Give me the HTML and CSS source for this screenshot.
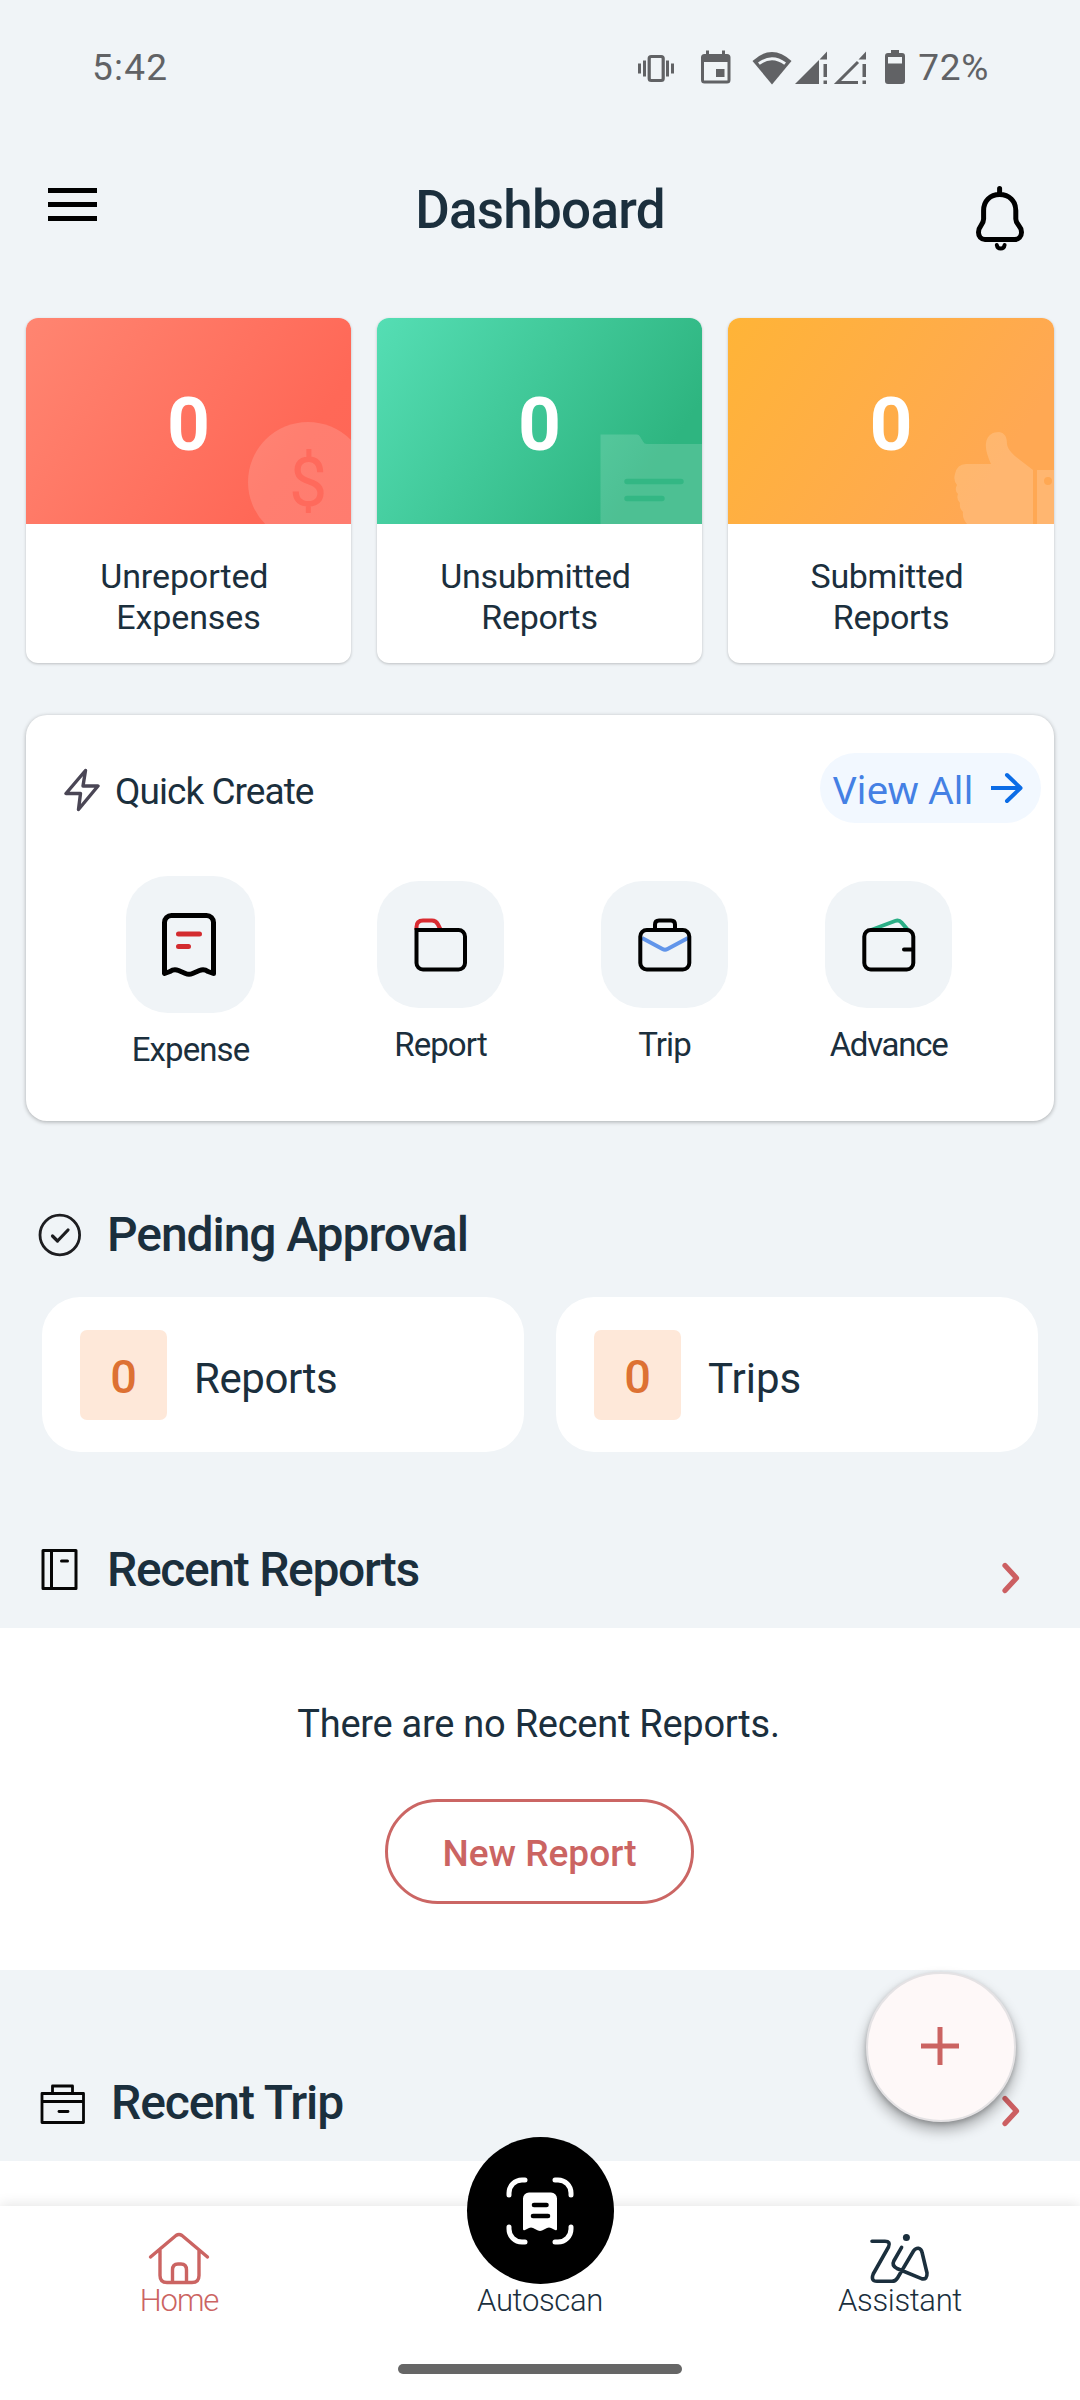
FILE: index.html
```html
<!DOCTYPE html>
<html lang="en">
<head>
<meta charset="utf-8">
<title>Dashboard</title>
<link rel="stylesheet" href="styles.css">
</head>
<body>
<div class="app">
  <div class="status">
    <span class="clock">5:42</span>
    <div class="status-icons">
      <svg class="i-vibrate" width="38" height="36" viewBox="0 0 38 36" fill="none" stroke="#616265"><rect x="12.2" y="6.5" width="14" height="24" rx="2" stroke-width="3.2"/><path d="M2.5 13.500v10M7.5 10.500v16M30.500 10.500v16M35.500 13.500v10" stroke-width="3"/></svg>
      <svg class="i-cal" width="32" height="36" viewBox="0 0 32 36"><path fill="#616265" fill-rule="evenodd" d="M6 .5h3V4h13V.5h3V4h2a3.500 3.500 0 0 1 3.500 3.500V30a3.500 3.500 0 0 1-3.500 3.500H4.500A3.500 3.500 0 0 1 1 30V7.500A3.500 3.500 0 0 1 4.500 4H6zM4 12v18.500h23.500V12zM16 19h8.500v8H16z"/></svg>
      <svg class="i-wifi" width="40" height="36" viewBox="0 0 40 36"><path d="M.5 11Q20-7 39.500 11L20 34.500z" fill="#616265"/><path d="M6 12.500Q20 2 34 12.500l-1.800 2.300Q20 5.500 7.800 14.800z" fill="#f0f4f7"/></svg>
      <svg class="i-sig" width="34" height="36" viewBox="0 0 34 36" fill="#616265"><path d="M1 34L25 10v24zM25.500 9.500L33 1.500V9.500zM29.500 14h3.500v13h-3.500zM29.500 30.500h3.500V34h-3.500z"/></svg>
      <svg class="i-sig2" width="34" height="36" viewBox="0 0 34 36" fill="#616265"><path d="M25.500 9.500L33 1.500V9.500zM29.500 14h3.500v13h-3.500zM29.500 30.500h3.500V34h-3.500z"/><path fill="none" stroke="#616265" stroke-width="3" d="M25 12L4.500 32.500H25"/></svg>
      <svg class="i-bat" width="20" height="36" viewBox="0 0 20 36"><path fill="#616265" fill-rule="evenodd" d="M6 0h8v3h3a3 3 0 0 1 3 3v25a3 3 0 0 1-3 3H3a3 3 0 0 1-3-3V6a3 3 0 0 1 3-3h3zM3 7v6.500h14V7z"/></svg>
      <span class="pct">72%</span>
    </div>
  </div>

  <header class="header">
    <svg class="menu" width="50" height="36" viewBox="0 0 50 36" stroke="#000" stroke-width="5"><path d="M0 3.500h49M0 17.500h49M0 31.500h49"/></svg>
    <h1 class="title">Dashboard</h1>
    <svg class="bell" width="48" height="66" viewBox="0 0 48 66" fill="none" stroke="#000" stroke-width="5" stroke-linecap="round" stroke-linejoin="round"><path d="M23.600 2.500v5M7.600 24.500C7.600 15 14 8.500 23.600 8.500S39.800 15 39.800 24.500V33c0 6 5.700 6.500 5.700 13.200 0 4.300-3 7.300-7 7.300H9c-4 0-6.500-3-6.500-7.300C2.500 39.500 7.600 39 7.600 33z"/><path stroke-width="4" d="M20.800 59q.6 3.600 3.900 3.600T28.600 59"/></svg>
  </header>

  <section class="stats">
    <article class="stat">
      <div class="stat-top red"><span class="num">0</span>
        <svg class="art" width="325" height="206" viewBox="0 0 325 206"><circle cx="282" cy="164" r="60" fill="#fff" fill-opacity=".15"/><text class="dollar" x="282" y="188" text-anchor="middle">$</text></svg>
      </div>
      <p class="stat-label s1">Unreported&nbsp;<br>Expenses</p>
    </article>
    <article class="stat">
      <div class="stat-top green"><span class="num">0</span>
        <svg class="art" width="325" height="206" viewBox="0 0 325 206"><path d="M223.500 116.500H260q2 0 3 2l3 5q1 2.500 4 2.500H325v80H223.500z" fill="#fff" fill-opacity=".15"/><path d="M250 163.500h54M250 180.500h35" stroke="#33b784" stroke-width="5.400" stroke-linecap="round"/></svg>
      </div>
      <p class="stat-label">Unsubmitted&nbsp;<br>Reports</p>
    </article>
    <article class="stat">
      <div class="stat-top orange"><span class="num">0</span>
        <svg class="art" width="326" height="206" viewBox="0 0 326 206"><path fill="#fff" fill-opacity=".17" d="M239 206q-5-6-4-12-4-4-3-9-4-4-2-9-4-4-1-9-4-5-2-11 2-10 11-10h25c-3-7-6-14-5-21 1-8 7-11 13-11 6 1 8 5 8 12 1 7 8 12 13 16l13 10v54z"/><path fill="#fff" fill-opacity=".17" fill-rule="evenodd" d="M309 152h17v54h-17zM324 163a4 4 0 1 0-8 0 4 4 0 0 0 8 0z"/></svg>
      </div>
      <p class="stat-label">Submitted&nbsp;<br>Reports</p>
    </article>
  </section>

  <section class="quick">
    <div class="quick-head">
      <svg class="bolt" width="36" height="44" viewBox="0 0 36 44" fill="none" stroke="#4a4655" stroke-width="3.400" stroke-linejoin="round"><path d="M21.500 2.500L2 25.500H16.500L14.500 41.500L34 18H19z"/></svg>
      <h2 class="quick-title">Quick Create</h2>
      <a class="view-all"><span>View All</span><svg width="34" height="32" viewBox="0 0 34 32" fill="none" stroke="#0b6ce6" stroke-width="4" stroke-linejoin="round"><path d="M1 16H30"/><path stroke-linecap="round" d="M17 3L30.500 16L17 29"/></svg></a>
    </div>
    <div class="tiles">
      <div class="tile-item first">
        <div class="tile"><svg width="54" height="64" viewBox="0 0 54 64" fill="none" stroke="#000" stroke-width="5" stroke-linejoin="round" stroke-linecap="round"><path d="M2.500 60.500V9.500a7 7 0 0 1 7-7h35a7 7 0 0 1 7 7v51l-5.500-2q-4-3-8.500-1l-7 3q-3.500 1.500-7 0l-7-3q-4.500-2-8.500 1z"/><path stroke="#d32b2f" d="M16.500 21h21M16.500 33.500h10"/></svg></div>
        <span class="tile-label">Expense</span>
      </div>
      <div class="tile-item">
        <div class="tile"><svg width="54" height="54" viewBox="0 0 54 54" fill="none" stroke="#000" stroke-width="4"><path stroke="#d92b31" d="M2.500 12V9Q2.500 2.500 9 2.500h9q4 0 6 4l2.500 5"/><path d="M2.500 12H44.500a6.500 6.500 0 0 1 6.500 6.500V45a6.500 6.500 0 0 1-6.500 6.500H9A6.500 6.500 0 0 1 2.500 45z"/></svg></div>
        <span class="tile-label">Report</span>
      </div>
      <div class="tile-item">
        <div class="tile"><svg width="54" height="54" viewBox="0 0 54 54" fill="none" stroke="#000" stroke-width="4"><path stroke="#6195ea" stroke-width="4" stroke-linejoin="round" d="M4 20L24.500 31q2.500 1.300 5 0L50 20"/><rect x="2.300" y="12" width="49" height="39.500" rx="6.500"/><path d="M17 12V6.500q0-4 4-4h12q4 0 4 4V12"/></svg></div>
        <span class="tile-label">Trip</span>
      </div>
      <div class="tile-item">
        <div class="tile"><svg width="54" height="54" viewBox="0 0 54 54" fill="none" stroke="#000" stroke-width="4"><path stroke="#2bae86" d="M9 12L33 3q4-1.500 6.500 1.500L46 12"/><rect x="2.300" y="12" width="49" height="39.500" rx="6.500"/><path stroke-linecap="round" d="M42 31.500h8"/></svg></div>
        <span class="tile-label tight">Advance</span>
      </div>
    </div>
  </section>

  <div class="section-head pending-head">
    <svg class="sec-icon" width="44" height="44" viewBox="0 0 44 44" fill="none" stroke="#1d1d20" stroke-width="2.800" stroke-linecap="round" stroke-linejoin="round"><circle cx="21.800" cy="22" r="19.800"/><path stroke-width="3.200" d="M14.500 23L19.500 28L30 17"/></svg>
    <h2 class="section-title">Pending Approval</h2>
  </div>
  <div class="pending">
    <div class="pcard"><span class="badge">0</span><span class="plabel">Reports</span></div>
    <div class="pcard"><span class="badge">0</span><span class="plabel wide">Trips</span></div>
  </div>

  <div class="section-head reports-head">
    <svg class="sec-icon" width="44" height="44" viewBox="0 0 44 44" fill="none" stroke="#060606" stroke-width="3" stroke-linejoin="round"><path d="M5 2.500H38V40.500H5zM13.500 2.500v38"/><path stroke-linecap="round" d="M23.500 13h6"/></svg>
    <h2 class="section-title t-reports">Recent Reports</h2>
    <svg class="chev" width="20" height="32" viewBox="0 0 20 32" fill="none" stroke="#cc5f62" stroke-width="5.200" stroke-linecap="round" stroke-linejoin="round"><path d="M4 3.500L15.500 16L4 28.500"/></svg>
  </div>
  <section class="empty">
    <p class="empty-text">There are no Recent Reports.</p>
    <button class="new-report" type="button"><span>New Report</span></button>
  </section>

  <div class="section-head trip-head">
    <svg class="sec-icon" width="48" height="44" viewBox="0 0 48 44" fill="none" stroke="#060606" stroke-width="2.800" stroke-linejoin="round"><path d="M4 12.500H45.500V41.500H4zM4 20.500H45.500M14.500 12.500V5H34.500V12.500"/><path stroke-linecap="round" d="M21 30.500h9"/></svg>
    <h2 class="section-title">Recent Trip</h2>
    <svg class="chev" width="20" height="32" viewBox="0 0 20 32" fill="none" stroke="#cc5f62" stroke-width="5.200" stroke-linecap="round" stroke-linejoin="round"><path d="M4 3.500L15.500 16L4 28.500"/></svg>
    <button class="fab" type="button" aria-label="Add"><svg width="38" height="38" viewBox="0 0 38 38" stroke="#cb6462" stroke-width="5"><path d="M19 0V38M0 19H38"/></svg></button>
  </div>
  <div class="trip-body"></div>

  <nav class="nav">
    <a class="nav-item active">
      <svg class="nav-icon" width="66" height="56" viewBox="0 0 66 56" fill="none" stroke="#cb6462" stroke-width="3.400" stroke-linecap="round" stroke-linejoin="round"><path d="M4.500 27L30 5.500q3-2 6 0L61.500 27M14 20V45.500Q14 52.500 21 52.500H46Q53 52.500 53 45.500V20M26.500 52V40Q26.500 34 32 34H35Q40.500 34 40.500 40V52"/></svg>
      <span>Home</span>
    </a>
    <a class="nav-item">
      <span class="scan"><svg width="68" height="68" viewBox="0 0 68 68" fill="none" stroke="#fff" stroke-width="5" stroke-linecap="round"><path d="M3 18V16A13 13 0 0 1 16 3H19M49 3H52A13 13 0 0 1 65 16V18M3 50V52A13 13 0 0 0 16 65H19M49 65H52A13 13 0 0 0 65 52V50"/><path fill="#fff" stroke="none" d="M17 21.500a6 6 0 0 1 6-6H45a6 6 0 0 1 6 6V52q0 1.800-2 1l-4-2q-2-1-4 0l-5 2.500q-2 .8-4 0L27 51q-2-1-4 0l-4 2q-2 .8-2-1z"/><path stroke="#000" stroke-width="4.600" d="M28 28H40.500M27 39H42"/></svg></span>
      <span class="nav-icon-space"></span>
      <span>Autoscan</span>
    </a>
    <a class="nav-item">
      <svg class="nav-icon" width="64" height="56" viewBox="0 0 64 56" fill="none" stroke="#1b2f3d" stroke-width="3.600" stroke-linecap="round" stroke-linejoin="round"><path d="M4 11.300H17Q23 11.300 20.500 17L5.200 44Q2.500 51.300 9 51.300H24Q27.500 51.300 29.500 48L45.500 21Q47.500 18 50.500 18.300 53.500 18.800 54.200 23L59 43Q59.500 50 53.500 48.700L29 38.500Q23.500 35.500 25.800 31L33.600 17.300"/><circle cx="38.400" cy="7.600" r="3.500" fill="#1b2f3d" stroke="none"/></svg>
      <span>Assistant</span>
    </a>
    <div class="home-bar"></div>
  </nav>
</div>
</body>
</html>
```

FILE: styles.css
```css
* { box-sizing: border-box; }
body { margin: 0; background: #f0f4f7; font-family: Roboto, "Liberation Sans", sans-serif; color: #1b2f3d; }
h1, h2, p { margin: 0; }
svg { display: block; flex: none; }
button { font: inherit; cursor: pointer; }

.app { width: 1080px; height: 2400px; overflow: hidden; display: flex; flex-direction: column; }
.app > * { flex: none; }

/* Status bar */
.status { height: 135px; padding: 0 91px 0 92px; display: flex; align-items: center; justify-content: space-between; color: #616265; font-size: 37px; letter-spacing: 1.2px; }
.status-icons { display: flex; align-items: center; }
.i-cal { margin-left: 25px; }
.i-wifi { margin-left: 20px; }
.i-sig { margin-left: 2px; }
.i-sig2 { margin-left: 5px; }
.i-bat { margin-left: 18px; }
.pct { margin-left: 13px; letter-spacing: .7px; }

/* App header */
.header { height: 150px; padding: 0 48px; display: grid; grid-template-columns: 1fr auto 1fr; align-items: center; }
.menu { margin-bottom: 10px; }
.title { font-size: 53px; font-weight: 500; line-height: 60px; letter-spacing: -.75px; }
.bell { justify-self: end; margin: 17px 8px 0 0; }

/* Summary cards */
.stats { padding: 33px 26px 0; display: grid; grid-template-columns: 325px 325px 326px; gap: 26px; }
.stat { background: #fff; border-radius: 12px; overflow: hidden; box-shadow: 0 1px 3px rgba(0, 0, 0, .22); height: 345px; }
.stat-top { position: relative; height: 206px; display: flex; align-items: center; justify-content: center; }
.red { background: linear-gradient(124deg, #ff8571 0%, #ff6857 78%, #ff6656 100%); }
.green { background: linear-gradient(124deg, #55deb4 0%, #2eb580 82%, #2eb580 100%); }
.orange { background: linear-gradient(124deg, #ffb437 0%, #ffa853 80%, #ffa853 100%); }
.num { color: #fff; font-size: 75px; font-weight: 700; line-height: 80px; padding-top: 5px; }
.art { position: absolute; left: 0; top: 0; }
.dollar { font-size: 68px; fill: #ff6a5c; }
.stat-label { padding-top: 32px; text-align: center; font-size: 34px; line-height: 41px; letter-spacing: -.3px; }
.stat-label.s1 { letter-spacing: -.1px; }

/* Quick create */
.quick { margin: 52px 26px 0; height: 406px; background: #fff; border-radius: 21px; box-shadow: 0 1px 4px rgba(0, 0, 0, .3); padding: 38px 13px 0 38px; }
.quick-head { display: flex; align-items: center; height: 70px; }
.bolt { margin-top: 3px; }
.quick-title { margin-left: 15px; padding-top: 8px; font-size: 37px; font-weight: 400; line-height: 44px; letter-spacing: -.95px; }
.view-all { margin-left: auto; width: 221px; height: 70px; padding: 0 17px 0 13px; border-radius: 35px; background: #f2f8ff; display: flex; align-items: center; justify-content: space-between; font-family: "Noto Sans", sans-serif; font-size: 39px; color: #4480e4; white-space: nowrap; }
.tiles { display: flex; align-items: flex-start; gap: 97px; padding: 53px 0 0 62px; }
.tile-item { width: 127px; padding-top: 5px; display: flex; flex-direction: column; align-items: center; gap: 17px; }
.tile-item.first { width: 129px; padding-top: 0; margin-right: 25px; }
.tile { width: 127px; height: 127px; border-radius: 42px; background: #f0f4f7; display: flex; align-items: center; justify-content: center; }
.first .tile { width: 129px; height: 137px; padding-right: 3px; }
.tile-label { font-size: 33px; line-height: 40px; letter-spacing: -.9px; }
.tile-label.tight { letter-spacing: -1.3px; }

/* Section headings */
.section-head { display: flex; align-items: center; height: 60px; padding: 0 59px 0 38px; }
.section-title { font-size: 48px; font-weight: 500; line-height: 60px; margin-left: 25px; letter-spacing: -1.08px; }
.section-title.t-reports { letter-spacing: -1.31px; }
.chev { margin: 16px 0 0 auto; }
.pending-head { margin-top: 84px; }
.reports-head { margin-top: 88px; margin-bottom: 28px; }
.trip-head { position: relative; margin-top: 103px; margin-bottom: 28px; }

/* Pending approval */
.pending { margin: 32px 42px 0; display: grid; grid-template-columns: 482px 482px; gap: 32px; }
.pcard { height: 155px; background: #fff; border-radius: 38px; padding-left: 38px; display: flex; align-items: center; }
.badge { width: 87px; height: 90px; padding-top: 4px; border-radius: 7px; background: #fee8d9; color: #dd7133; font-size: 47px; font-weight: 500; display: flex; align-items: center; justify-content: center; }
.plabel { margin-left: 27px; padding-top: 8px; font-size: 42px; letter-spacing: -.45px; }
.plabel.wide { letter-spacing: 0; }

/* Empty report list */
.empty { height: 342px; background: #fff; padding-top: 72px; display: flex; flex-direction: column; align-items: center; }
.empty-text { font-size: 38px; line-height: 48px; letter-spacing: -.26px; margin-right: 3px; }
.new-report { margin: 51px 1px 0 0; width: 309px; height: 105px; padding: 3px 0 0; border: 3px solid #cb6664; border-radius: 53px; background: none; color: #cb6462; font-size: 37px; font-weight: 500; }

.trip-body { height: 45px; background: #fff; }
.fab { position: absolute; left: 866px; top: -101px; width: 150px; height: 150px; border-radius: 50%; border: 2px solid #e4e2e4; background: #fef8f8; padding: 0 2px 2px 0; display: flex; align-items: center; justify-content: center; box-shadow: 0 8px 14px rgba(0, 0, 0, .32), 0 2px 5px rgba(0, 0, 0, .2); }

/* Bottom navigation */
.nav { position: relative; height: 194px; background: #fff; box-shadow: 0 -2px 12px rgba(0, 0, 0, .1); display: grid; grid-template-columns: repeat(3, 1fr); padding-top: 24px; }
.nav-item { position: relative; display: flex; flex-direction: column; align-items: center; font-size: 31px; font-weight: 300; line-height: 32px; letter-spacing: -.35px; }
.nav-item.active { color: #cb6462; letter-spacing: -1.1px; padding-right: 2px; }
.nav-icon, .nav-icon-space { height: 56px; margin-bottom: -1px; }
.scan { position: absolute; top: -93px; width: 147px; height: 147px; border-radius: 50%; background: #000; display: flex; align-items: center; justify-content: center; }
.home-bar { position: absolute; left: 398px; bottom: 26px; width: 284px; height: 10px; border-radius: 5px; background: #666; }
```
